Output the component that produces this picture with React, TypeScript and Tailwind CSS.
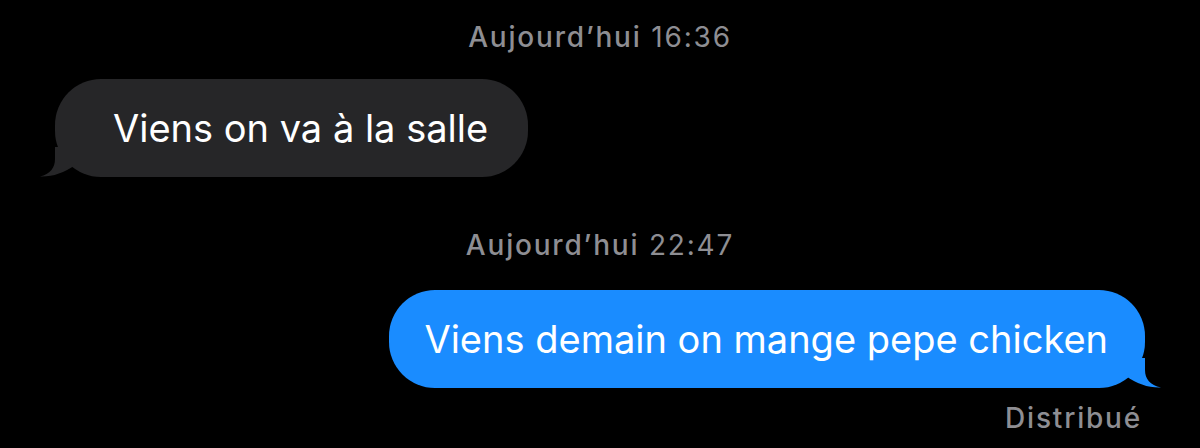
import React from 'react';

const Stamp = ({ day, time }: { day: string; time: string }) => (
  <div className="text-center text-[28px] leading-[30px] tracking-[1.8px] text-[#8e8e93]">
    <span className="font-medium">{day}</span> <span>{time}</span>
  </div>
);

export default function App() {
  return (
    <div className="w-[1200px] h-[448px] bg-black overflow-hidden flex flex-col font-['Inter',sans-serif]">
      <div className="pt-[22px]">
        <Stamp day="Aujourd’hui" time="16:36" />
      </div>

      {/* incoming */}
      <div className="pl-[55px] pt-[27px] flex">
        <div className="relative h-[98px] bg-[#262628] rounded-[46px] pl-[58px] pr-[40px] flex items-center text-[38px] text-white">
          <svg className="absolute left-[-15px] bottom-0" width="40" height="30" viewBox="0 0 40 30">
            <path d="M15 0 L15 12 C15 21 10 27 0 29.5 C12 30 24 26 35 18 L35 0 Z" fill="#262628" />
          </svg>
          <span className="relative">Viens on va à la salle</span>
        </div>
      </div>

      <div className="pt-[53px]">
        <Stamp day="Aujourd’hui" time="22:47" />
      </div>

      {/* outgoing */}
      <div className="pr-[55px] pt-[30px] flex justify-end">
        <div className="relative h-[98px] bg-[#1a8cff] rounded-[46px] pl-[35px] pr-[37px] flex items-center text-[38px] text-white">
          <svg className="absolute right-[-16px] bottom-0" width="40" height="30" viewBox="0 0 40 30">
            <path d="M24 0 L24 12 C24 21 29 27 40 29.5 C28 30 16 26 5 18 L5 0 Z" fill="#1a8cff" />
          </svg>
          <span className="relative">Viens demain on mange pepe chicken</span>
        </div>
      </div>

      <div className="pr-[58px] pt-[15px] flex justify-end">
        <span className="text-[28px] leading-[30px] tracking-[1.8px] font-medium text-[#8e8e93]">Distribué</span>
      </div>
    </div>
  );
}
